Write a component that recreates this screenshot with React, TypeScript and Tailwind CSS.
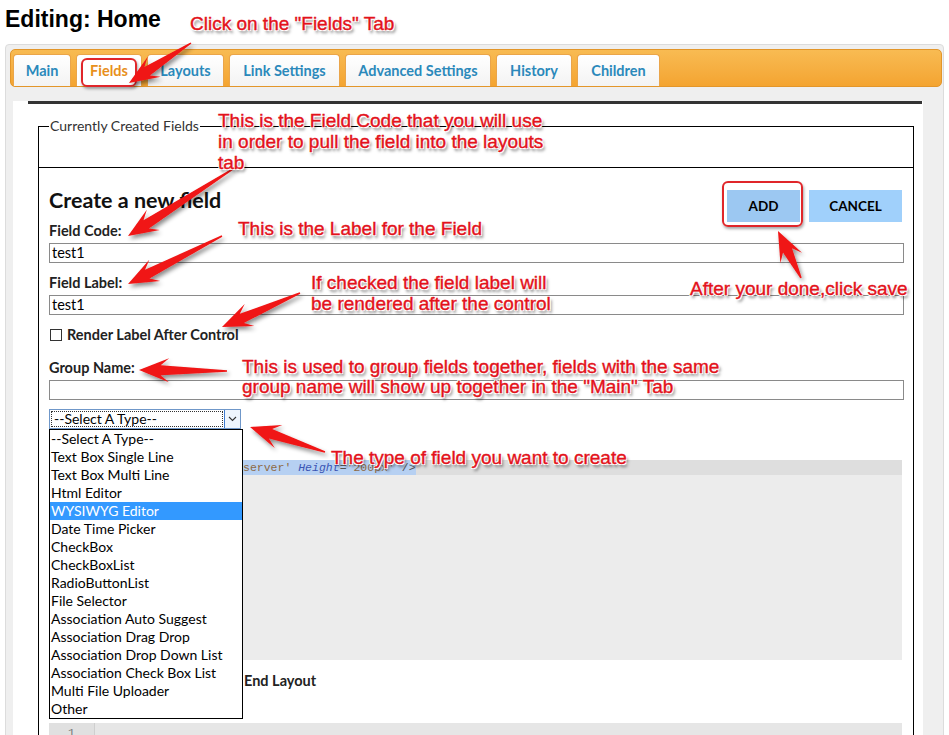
import React from 'react'

const tabs = [
  { label: 'Main', w: 'w-[58px]' },
  { label: 'Fields', w: 'w-[66px]', active: true },
  { label: 'Layouts', w: 'w-[77px]' },
  { label: 'Link Settings', w: 'w-[111px]' },
  { label: 'Advanced Settings', w: 'w-[146px]' },
  { label: 'History', w: 'w-[76px]' },
  { label: 'Children', w: 'w-[83px]' },
]

const types = [
  '--Select A Type--',
  'Text Box Single Line',
  'Text Box Multi Line',
  'Html Editor',
  'WYSIWYG Editor',
  'Date Time Picker',
  'CheckBox',
  'CheckBoxList',
  'RadioButtonList',
  'File Selector',
  'Association Auto Suggest',
  'Association Drag Drop',
  'Association Drop Down List',
  'Association Check Box List',
  'Multi File Uploader',
  'Other',
]

// tapered red arrow, tail -> tip
function arrow(x1: number, y1: number, x2: number, y2: number, L = 30, W = 24) {
  const dx = x2 - x1
  const dy = y2 - y1
  const len = Math.hypot(dx, dy)
  const ux = dx / len
  const uy = dy / len
  const nx = -uy
  const ny = ux
  const bx = x2 - ux * L * 0.72
  const by = y2 - uy * L * 0.72
  const wx = x2 - ux * L
  const wy = y2 - uy * L
  const w0 = 1.5
  const w1 = 10
  const pts = [
    [x1 + (nx * w0) / 2, y1 + (ny * w0) / 2],
    [bx + (nx * w1) / 2, by + (ny * w1) / 2],
    [wx + (nx * W) / 2, wy + (ny * W) / 2],
    [x2, y2],
    [wx - (nx * W) / 2, wy - (ny * W) / 2],
    [bx - (nx * w1) / 2, by - (ny * w1) / 2],
    [x1 - (nx * w0) / 2, y1 - (ny * w0) / 2],
  ]
  return pts.map(p => p[0].toFixed(1) + ',' + p[1].toFixed(1)).join(' ')
}

const arrows = [
  [191, 43, 129, 83],
  [236, 167, 128, 236],
  [222, 236, 128, 284],
  [300, 293, 222, 327],
  [227, 371, 139, 370],
  [325, 452, 250, 427],
  [801, 278, 778, 231],
]

const note =
  "absolute font-['Liberation_Sans',Arial,sans-serif] text-[19px] text-[#e3121b] whitespace-nowrap [-webkit-text-stroke:0.4px_#e3121b] [text-shadow:-1px_-1px_0_#fff,1px_-1px_0_#fff,-1px_1px_0_#fff,1px_1px_0_#fff,2px_3px_3px_rgba(0,0,0,0.55)]"

function Label({ children }: { children: React.ReactNode }) {
  return <div className="text-[14.5px] font-bold leading-[16px] text-[#222]">{children}</div>
}

function Input({ value = '' }: { value?: string }) {
  return (
    <div className="mt-[4px] h-[20px] w-[855px] border border-[#8a8a8a] pl-[2px] text-[14.5px] leading-[18px] text-black">
      {value}
    </div>
  )
}

export default function App() {
  return (
    <div className="relative w-[949px] h-[735px] overflow-hidden bg-white font-['Lato',sans-serif]">
      <h1 className="pl-[5px] pt-[6px] text-[23px] font-bold leading-[26px] text-black font-['Liberation_Sans',Arial,sans-serif]">
        Editing: Home
      </h1>

      <div className="ml-[5px] mt-[12px] w-[939px] h-[720px] rounded-[4px] border border-[#dcdcdc] bg-[#efefef] pt-[4px] pl-[4px] pr-[1px]">
        {/* tab bar */}
        <div className="flex h-[38px] items-end gap-[5px] rounded-[5px] border border-[#e3962a] bg-gradient-to-b from-[#f8bb52] to-[#f4a430] pl-[2px]">
          {tabs.map(t => (
            <div
              key={t.label}
              className={`${t.w} flex h-[32px] items-center justify-center rounded-t-[4px] border border-b-0 border-[#eaa54a] text-[14.5px] font-bold ${
                t.active ? 'bg-white text-[#e8901c]' : 'bg-gradient-to-b from-white to-[#f3f3f3] text-[#2b89bb]'
              }`}
            >
              {t.label}
            </div>
          ))}
        </div>

        <div className="ml-[3px] mt-[14px] h-[640px] w-[910px] bg-white">
          <div className="ml-[15px] mr-[1px] border-t-[3px] border-[#333]" />

          <fieldset className="ml-[25px] mt-[14px] h-[50px] w-[876px] border border-black pl-[10px]">
            <legend className="px-[1px] text-[14px] leading-[16px] text-[#333]">Currently Created Fields</legend>
          </fieldset>

          <div className="ml-[25px] h-[600px] w-[876px] border-x border-black pl-[10px]">
            <div className="flex w-[853px] items-start justify-between pt-[22px]">
              <div className="text-[21.5px] font-bold leading-[20px] text-[#111]">Create a new field</div>
              <div className="flex gap-[9px]">
                <div className="flex h-[32px] w-[73px] items-center justify-center bg-[#9cc8f2] text-[13.5px] font-bold text-black">
                  ADD
                </div>
                <div className="flex h-[32px] w-[93px] items-center justify-center bg-[#a0d0fb] text-[13.5px] font-bold text-black">
                  CANCEL
                </div>
              </div>
            </div>

            <div className="mt-[1px]">
              <Label>Field Code:</Label>
            </div>
            <Input value="test1" />
            <div className="mt-[12px]">
              <Label>Field Label:</Label>
            </div>
            <Input value="test1" />

            <div className="mt-[12px] flex h-[16px] items-center gap-[5px]">
              <div className="ml-[1px] h-[12px] w-[12px] border border-[#333] bg-white" />
              <Label>Render Label After Control</Label>
            </div>

            <div className="mt-[17px]">
              <Label>Group Name:</Label>
            </div>
            <Input />

            <div className="mt-[9px] flex h-[20px] w-[192px] border border-[#6f97c9] bg-white">
              <div className="m-[1px] flex flex-1 items-center border border-dotted border-[#333] pl-[2px] text-[14px] leading-[16px] text-black">
                --Select A Type--
              </div>
              <div className="flex w-[16px] items-center justify-center border-l border-[#3d7bd0] bg-[#eef5fd]">
                <svg width="9" height="6" viewBox="0 0 9 6">
                  <path d="M1 1 L4.5 4.5 L8 1" fill="none" stroke="#333" strokeWidth="1.1" />
                </svg>
              </div>
            </div>

            {/* layout editor */}
            <div className="mt-[31px] h-[200px] w-[853px] bg-[#ececec] font-['Liberation_Mono',monospace] text-[11.5px] leading-[15px]">
              <div className="flex h-[15px] bg-[#dedede]">
                <div className="w-[46px]" />
                <span className="bg-[#b6d0f2] pl-[148px] whitespace-pre">
                  <span className="text-[#8d6a45]">server'</span>
                  <span className="text-[#555]"> </span>
                  <span className="italic text-[#3a55b4]">Height</span>
                  <span className="text-[#555]">=</span>
                  <span className="text-[#8d6a45]">'200px'</span>
                  <span className="text-[#555]"> /&gt;</span>
                </span>
              </div>
            </div>

            <div className="mt-[13px] pl-[195px]">
              <Label>End Layout</Label>
            </div>

            <div className="mt-[34px] flex h-[40px] w-[853px] bg-[#e6e6e6] font-['Liberation_Mono',monospace] text-[11.5px] leading-[15px]">
              <div className="w-[46px] border-r border-[#cfcfcf] bg-[#e0e0e0] pt-[2px] text-center text-[#777]">1</div>
            </div>
          </div>
        </div>
      </div>

      {/* open dropdown list */}
      <div className="absolute left-[49px] top-[429px] w-[194px] border border-black bg-white">
        {types.map(t => (
          <div
            key={t}
            className={`h-[18px] pl-[1px] text-[14px] leading-[18px] ${
              t === 'WYSIWYG Editor' ? 'bg-[#3399ff] text-white' : 'text-black'
            }`}
          >
            {t}
          </div>
        ))}
      </div>

      {/* annotations */}
      <div className="absolute left-[81px] top-[58px] h-[29px] w-[56px] rounded-[6px] border-2 border-[#e0262a] shadow-[1px_2px_3px_rgba(0,0,0,0.35)]" />
      <div className="absolute left-[722px] top-[181px] h-[46px] w-[81px] rounded-[6px] border-2 border-[#e0262a] shadow-[1px_2px_3px_rgba(0,0,0,0.35)]" />

      <svg className="pointer-events-none absolute left-0 top-0" width="949" height="735">
        <defs>
          <filter id="sh" x="-20%" y="-20%" width="140%" height="140%">
            <feDropShadow dx="2" dy="3" stdDeviation="2" floodColor="#000" floodOpacity="0.45" />
          </filter>
        </defs>
        {arrows.map((a, i) => (
          <polygon key={i} points={arrow(a[0], a[1], a[2], a[3])} fill="#f01414" filter="url(#sh)" />
        ))}
      </svg>

      <div className={`${note} left-[190px] top-[14px] leading-[20px] text-[18px]`}>Click on the "Fields" Tab</div>
      <div className={`${note} left-[218px] top-[110px] leading-[21px]`}>
        This is the Field Code that you will use
        <br />
        in order to pull the field into the layouts
        <br />
        tab
      </div>
      <div className={`${note} left-[238px] top-[219px] leading-[20px]`}>This is the Label for the Field</div>
      <div className={`${note} left-[311px] top-[272px] leading-[21px]`}>
        If checked the field label will
        <br />
        be rendered after the control
      </div>
      <div className={`${note} left-[690px] top-[279px] leading-[20px]`}>After your done,click save</div>
      <div className={`${note} left-[242px] top-[357px] leading-[20px]`}>
        This is used to group fields together, fields with the same
        <br />
        group name will show up together in the "Main" Tab
      </div>
      <div className={`${note} left-[331px] top-[448px] leading-[20px]`}>The type of field you want to create</div>
    </div>
  )
}
